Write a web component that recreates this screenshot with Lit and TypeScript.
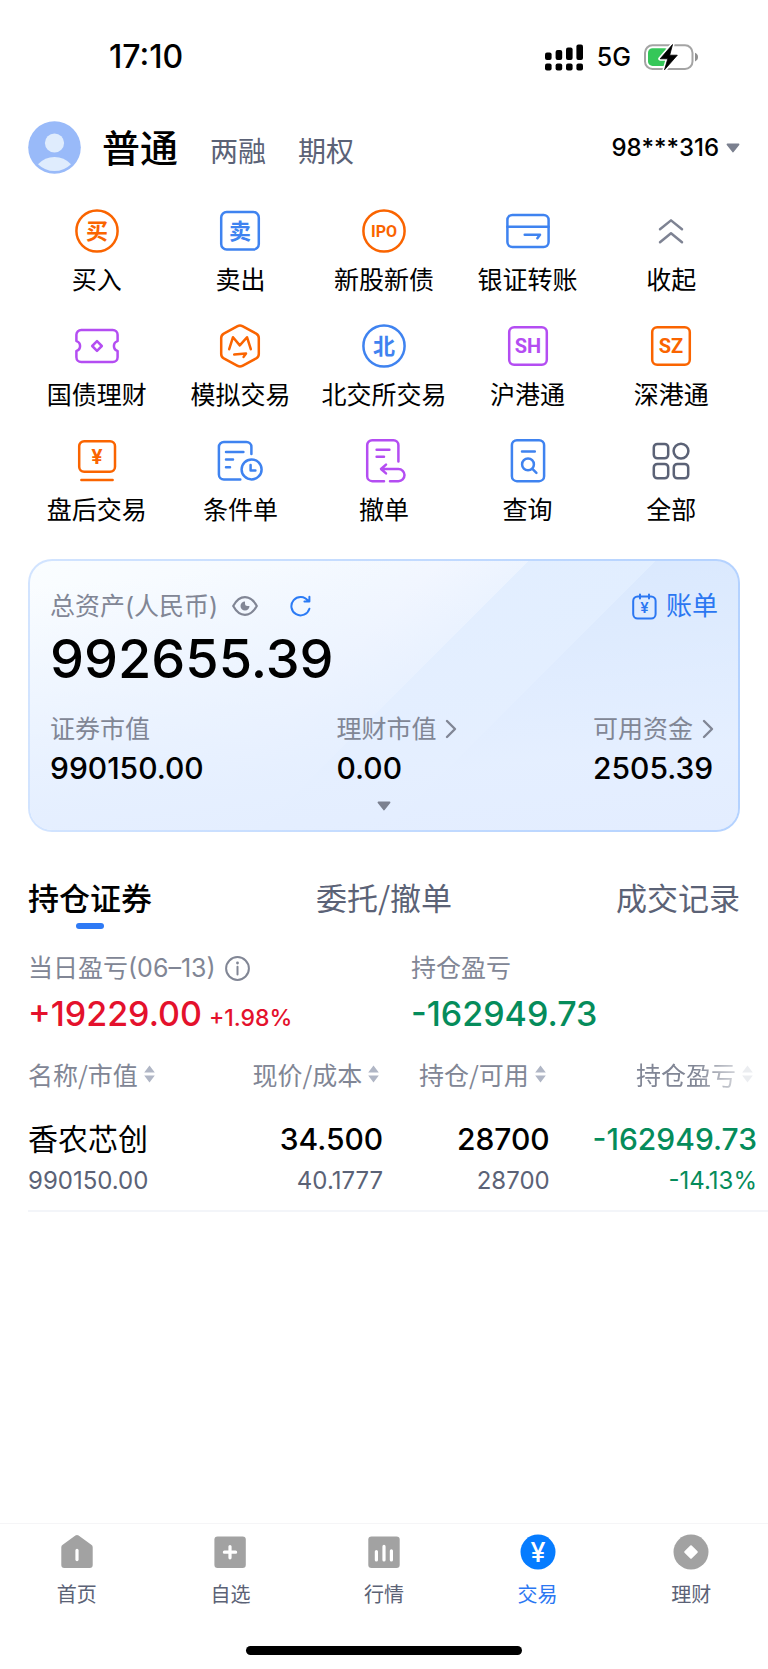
import { LitElement, html, css, TemplateResult } from "lit";
import { customElement, state } from "lit/decorators.js";

const ORANGE = "#fa6400";
const BLUE = "#3f83f0";
const PURPLE = "#b44df2";

const icon = (color: string, body: TemplateResult) => html`
  <span class="glyph" style="color:${color}">${body}</span>
`;

interface Shortcut {
  label: string;
  color: string;
  art: TemplateResult;
}

const shortcuts: Shortcut[] = [
  {
    label: "买入",
    color: ORANGE,
    art: html`<svg viewBox="0 0 48 48" aria-hidden="true">
      <circle cx="24" cy="24" r="20.6" />
      <text class="han" x="24" y="32">买</text>
    </svg>`,
  },
  {
    label: "卖出",
    color: BLUE,
    art: html`<svg viewBox="0 0 48 48" aria-hidden="true">
      <rect x="5.2" y="5" width="37.6" height="37.6" rx="5.5" />
      <text class="han" x="24" y="32">卖</text>
    </svg>`,
  },
  {
    label: "新股新债",
    color: ORANGE,
    art: html`<svg viewBox="0 0 48 48" aria-hidden="true">
      <circle cx="24" cy="24" r="20.6" />
      <text class="ipo" x="24" y="29.8">IPO</text>
    </svg>`,
  },
  {
    label: "银证转账",
    color: BLUE,
    art: html`<svg viewBox="0 0 48 48" aria-hidden="true">
      <rect x="3.4" y="7.9" width="41.2" height="32.2" rx="5" />
      <path d="M3.4 19.7h41.2M20.7 27.7H36l-2.6 3.5" />
    </svg>`,
  },
  {
    label: "收起",
    color: "#7e8393",
    art: html`<svg viewBox="0 0 48 48" aria-hidden="true">
      <path d="M13 22.3L24 13.4l11 8.9M13 35.2l11-8.9 11 8.9" />
    </svg>`,
  },
  {
    label: "国债理财",
    color: PURPLE,
    art: html`<svg viewBox="0 0 48 48" aria-hidden="true">
      <path
        d="M8.2 7.9h31.6a4.8 4.8 0 0 1 4.8 4.8v6.4a5.1 5.1 0 0 0 0 9.8v6.4a4.8 4.8 0 0 1-4.8 4.8H8.2a4.8 4.8 0 0 1-4.8-4.8v-6.4a5.1 5.1 0 0 0 0-9.8v-6.4a4.8 4.8 0 0 1 4.8-4.8z"
      />
      <path d="M24 19.2l4.8 4.8-4.8 4.8-4.8-4.8z" />
    </svg>`,
  },
  {
    label: "模拟交易",
    color: ORANGE,
    art: html`<svg viewBox="0 0 48 48" aria-hidden="true">
      <path
        d="M21.6 4.1Q24 2.8 26.4 4.1L40.2 11.6Q42.8 13.1 42.8 16V32Q42.8 34.9 40.2 36.4L26.4 43.9Q24 45.2 21.6 43.9L7.8 36.4Q5.2 34.9 5.2 32V16Q5.2 13.1 7.8 11.6z"
      />
      <path d="M13.2 27.2L17 15.2l6.8 8.2L31 15.2l3.8 12M18.2 32.6l11.8-1.1-2.4 3.4" />
    </svg>`,
  },
  {
    label: "北交所交易",
    color: BLUE,
    art: html`<svg viewBox="0 0 48 48" aria-hidden="true">
      <circle cx="24" cy="24" r="20.6" />
      <text class="han" x="24" y="31.6">北</text>
    </svg>`,
  },
  {
    label: "沪港通",
    color: PURPLE,
    art: html`<svg viewBox="0 0 48 48" aria-hidden="true">
      <rect x="5.2" y="5.2" width="37.6" height="37.6" rx="5" />
      <text class="code" x="24" y="31.2">SH</text>
    </svg>`,
  },
  {
    label: "深港通",
    color: ORANGE,
    art: html`<svg viewBox="0 0 48 48" aria-hidden="true">
      <rect x="5.2" y="5.2" width="37.6" height="37.6" rx="5" />
      <text class="code" x="24" y="31.2">SZ</text>
    </svg>`,
  },
  {
    label: "盘后交易",
    color: ORANGE,
    art: html`<svg viewBox="0 0 48 48" aria-hidden="true">
      <rect x="6.2" y="4.2" width="35.8" height="30.6" rx="5" />
      <path d="M8.4 43h31.2" />
      <text class="yuan" x="24" y="27">¥</text>
    </svg>`,
  },
  {
    label: "条件单",
    color: BLUE,
    art: html`<svg viewBox="0 0 48 48" aria-hidden="true">
      <path
        d="M35.4 17V10a5 5 0 0 0-5-5H7.9a5 5 0 0 0-5 5v27.5a5 5 0 0 0 5 5h16.4M10 15h17.4M10 22.6h7M10 30.3h4"
      />
      <circle cx="35.6" cy="32.4" r="10" />
      <path d="M34.6 28v5.4h4.8" />
    </svg>`,
  },
  {
    label: "撤单",
    color: PURPLE,
    art: html`<svg viewBox="0 0 48 48" aria-hidden="true">
      <path
        d="M38.4 24.4V8.2a5 5 0 0 0-5-5H12.2a5 5 0 0 0-5 5v31a5 5 0 0 0 5 5H24M16.6 12.7h12.8M16.6 19.7H24"
      />
      <path d="M22 32h16.4a6 6 0 0 1 0 12.2H30M26 27.6L21 32l5 4.4" />
    </svg>`,
  },
  {
    label: "查询",
    color: BLUE,
    art: html`<svg viewBox="0 0 48 48" aria-hidden="true">
      <rect x="7.9" y="3.2" width="32.2" height="41" rx="5" />
      <path d="M18 14.4h12.8M28.4 31.8l4 4" />
      <circle cx="24" cy="27.4" r="5.9" />
    </svg>`,
  },
  {
    label: "全部",
    color: "#5b6276",
    art: html`<svg viewBox="0 0 48 48" aria-hidden="true">
      <rect x="6.8" y="6.9" width="14.4" height="14.4" rx="3.6" />
      <circle cx="34" cy="14.1" r="7.4" />
      <rect x="6.8" y="26.9" width="14.4" height="14.4" rx="3.6" />
      <rect x="26.8" y="26.9" width="14.4" height="14.4" rx="3.6" />
    </svg>`,
  },
];

const navItems = [
  {
    label: "首页",
    art: html`<svg viewBox="0 0 36 36" aria-hidden="true">
      <path
        fill="currentColor"
        d="M16.4 1.5a2.6 2.6 0 0 1 3.2 0l12.7 9.2a3 3 0 0 1 1.4 2.6V31a3 3 0 0 1-3 3H5.3a3 3 0 0 1-3-3V13.3a3 3 0 0 1 1.4-2.6z"
      />
      <path class="cut" d="M18 16.4v9.2" />
    </svg>`,
  },
  {
    label: "自选",
    art: html`<svg viewBox="0 0 36 36" aria-hidden="true">
      <rect x="2.4" y="2.4" width="31.4" height="31.6" rx="3.2" fill="currentColor" />
      <path class="cut" d="M18 12.6v11.2M12.4 18.2h11.2" />
    </svg>`,
  },
  {
    label: "行情",
    art: html`<svg viewBox="0 0 36 36" aria-hidden="true">
      <rect x="2.3" y="2.4" width="31.4" height="31.6" rx="3.2" fill="currentColor" />
      <path class="cut" d="M10.4 17.6v8.4M18 12.4v13.6M25.4 16.8v9.2" />
    </svg>`,
  },
  {
    label: "交易",
    art: html`<svg viewBox="0 0 36 36" aria-hidden="true">
      <circle cx="18" cy="18" r="17.5" fill="currentColor" />
      <text class="mark" x="18" y="27.6">¥</text>
    </svg>`,
  },
  {
    label: "理财",
    art: html`<svg viewBox="0 0 36 36" aria-hidden="true">
      <circle cx="18" cy="18" r="17.5" fill="currentColor" />
      <path
        d="M18 12.2l5.8 5.8-5.8 5.8-5.8-5.8z"
        fill="#fff"
        stroke="#fff"
        stroke-width="2"
        stroke-linejoin="round"
      />
    </svg>`,
  },
];

const columns = ["名称/市值", "现价/成本", "持仓/可用", "持仓盈亏"];

const positions = [
  {
    name: "香农芯创",
    value: "990150.00",
    price: "34.500",
    cost: "40.1777",
    held: "28700",
    usable: "28700",
    profit: "-162949.73",
    rate: "-14.13%",
  },
];

@customElement("app-root")
export class AppRoot extends LitElement {
  @state() private tab = 0;
  @state() private nav = 3;

  static styles = css`
    :host {
      display: block;
      background: #fff;
      color: #000;
      font-family: Inter, "Noto Sans CJK SC", sans-serif;
      font-size: 25px;
    }
    * {
      box-sizing: border-box;
    }
    button {
      font: inherit;
      color: inherit;
      background: none;
      border: 0;
      padding: 0;
      margin: 0;
      cursor: pointer;
    }
    a {
      color: inherit;
      text-decoration: none;
    }
    svg {
      display: block;
      flex: none;
    }
    dl,
    dd,
    p {
      margin: 0;
      font-weight: inherit;
    }
    .page {
      display: flex;
      flex-direction: column;
      min-height: 100vh;
    }

    .status {
      display: flex;
      align-items: center;
      justify-content: space-between;
      padding: 36px 70px 0 109px;
      line-height: 42px;
      font-size: 32px;
      font-weight: 500;
    }
    .signals {
      display: flex;
      align-items: center;
      gap: 13px;
      font-size: 25px;
    }

    .account {
      display: flex;
      align-items: center;
      padding: 43px 28px 0;
    }
    .kinds {
      display: flex;
      align-items: baseline;
      gap: 32px;
      margin-left: 21px;
      padding-top: 4px;
      line-height: 40px;
      font-size: 28px;
      color: #5b6276;
    }
    .kinds .current {
      font-size: 38px;
      font-weight: 500;
      color: #000;
    }
    .number {
      display: flex;
      align-items: center;
      gap: 7px;
      margin-left: auto;
      font-size: 24px;
      font-weight: 500;
    }
    .caret {
      color: #7b808f;
    }

    .shortcuts {
      display: grid;
      grid-template-columns: repeat(5, 1fr);
      row-gap: 24px;
      padding: 33px 25px 0;
    }
    .shortcut {
      display: flex;
      flex-direction: column;
      align-items: center;
      gap: 8px;
      line-height: 35px;
      white-space: nowrap;
    }
    .glyph svg {
      width: 48px;
      height: 48px;
      fill: none;
      stroke: currentColor;
      stroke-width: 2.5;
      stroke-linecap: round;
      stroke-linejoin: round;
    }
    .glyph text {
      fill: currentColor;
      stroke: none;
      text-anchor: middle;
      font-weight: 700;
    }
    .glyph .han {
      font-family: "Noto Sans CJK SC", sans-serif;
      font-size: 22px;
    }
    .ipo {
      font-family: Roboto, sans-serif;
      font-size: 16px;
    }
    .code {
      font-family: Roboto, sans-serif;
      font-size: 20px;
    }
    .yuan {
      font-size: 20px;
    }

    .assets {
      margin: 31px 28px 0;
      padding: 27px 20px 19px;
      border: 2px solid transparent;
      border-radius: 24px;
      background:
        linear-gradient(175deg, rgba(229, 239, 255, 0) 8%, rgba(229, 239, 255, 0.96) 74%, #e3edff)
          padding-box,
        linear-gradient(
            135deg,
            #fafdff 0%,
            #f3f8ff 38%,
            #f3f7ff 42%,
            #edf4ff 51%,
            #e2eeff 51%,
            #e1eeff 64%,
            #d9e8fe 64%,
            #d8e8fe 100%
          )
          padding-box,
        linear-gradient(90deg, #d2e4ff, #b4d2ff) border-box;
    }
    .assets-head {
      display: flex;
      align-items: center;
      line-height: 36px;
      color: #818695;
    }
    .eye {
      margin-left: 14px;
    }
    .refresh {
      margin-left: 32px;
      color: #2b7bf5;
    }
    .bill {
      display: flex;
      align-items: center;
      gap: 9px;
      margin-left: auto;
      font-size: 26px;
      color: #2b77f2;
    }
    .bill text {
      fill: currentColor;
      text-anchor: middle;
      font-size: 15px;
      font-weight: 600;
    }
    .total {
      margin-top: 3px;
      line-height: 64px;
      font-size: 54px;
      font-weight: 500;
    }
    .parts {
      display: grid;
      grid-template-columns: 287fr 257fr auto;
      margin-top: 20px;
      padding-right: 4px;
    }
    .parts dt {
      display: flex;
      align-items: center;
      gap: 9px;
      line-height: 36px;
      color: #818695;
    }
    .parts dd {
      margin-top: 1px;
      line-height: 40px;
      font-size: 30px;
      font-weight: 500;
    }
    .more {
      display: block;
      margin: 13px auto 0;
    }

    .tabs {
      display: flex;
      justify-content: space-between;
      padding: 43px 28px 0;
      font-family: "Noto Sans CJK SC", sans-serif;
      font-size: 31px;
      line-height: 44px;
      color: #5b6276;
    }
    .tab {
      display: flex;
      flex-direction: column;
      align-items: center;
      gap: 4px;
    }
    .tab::after {
      content: "";
      width: 28px;
      height: 6px;
      border-radius: 3px;
    }
    .tab.on {
      color: #000;
      font-weight: 500;
    }
    .tab.on::after {
      background: #2f7af5;
    }

    .summary {
      display: grid;
      grid-template-columns: 383fr 329fr;
      padding: 21px 28px 0;
    }
    .summary dt {
      display: flex;
      align-items: center;
      gap: 9px;
      line-height: 36px;
      color: #818695;
    }
    .summary dd {
      display: flex;
      align-items: baseline;
      gap: 7px;
      margin-top: 4px;
      line-height: 48px;
      font-size: 34px;
      font-weight: 500;
    }
    .rate {
      font-size: 23px;
    }
    .up {
      color: #e4112c;
    }
    .down {
      color: #058c5b;
    }

    .positions {
      width: calc(100% - 28px);
      margin: 14px 0 0 28px;
      border-collapse: collapse;
      table-layout: fixed;
    }
    .positions th {
      padding: 0;
      font-weight: 400;
      text-align: right;
      line-height: 36px;
      color: #818695;
    }
    .positions th:nth-child(1) {
      width: 23%;
    }
    .positions th:nth-child(2) {
      width: 25%;
    }
    .positions th:nth-child(3) {
      width: 22.5%;
    }
    .positions th:nth-child(n + 2) {
      padding-right: 4px;
    }
    .positions th:first-child,
    .positions td:first-child {
      text-align: left;
    }
    .positions th:last-child {
      padding-right: 15px;
    }
    .positions th:last-child .sort {
      mask-image: linear-gradient(90deg, #000 50%, rgba(0, 0, 0, 0.25) 92%);
    }
    .positions td:last-child {
      padding-right: 11px;
    }
    .sort {
      display: inline-flex;
      align-items: center;
      gap: 6px;
      font-family: "Noto Sans CJK SC", sans-serif;
      white-space: nowrap;
    }
    .positions td {
      padding: 25px 0 11px;
      border-bottom: 2px solid #f3f5f9;
      text-align: right;
      white-space: nowrap;
    }
    .main {
      line-height: 40px;
      font-size: 30px;
      font-weight: 500;
    }
    .name {
      font-weight: 400;
    }
    .sub {
      margin-top: 4px;
      line-height: 36px;
      font-size: 24px;
    }
    .muted {
      color: #5b6276;
    }

    .bottom {
      margin-top: auto;
      padding-bottom: 14px;
      border-top: 1px solid #f5f5f7;
    }
    .nav {
      display: grid;
      grid-template-columns: repeat(5, 1fr);
      padding-top: 10px;
    }
    .nav a {
      display: flex;
      flex-direction: column;
      align-items: center;
      gap: 11px;
      font-size: 20px;
      line-height: 28px;
      color: #5b6276;
    }
    .nav a.on {
      color: #2b77f2;
    }
    .nav svg {
      width: 36px;
      height: 36px;
      color: #a2a2a2;
    }
    .nav a.on svg {
      color: #067cff;
    }
    .cut {
      fill: none;
      stroke: #fff;
      stroke-width: 3.2;
      stroke-linecap: round;
    }
    .mark {
      fill: #fff;
      text-anchor: middle;
      font-size: 27px;
      font-weight: 500;
    }
    .handle {
      width: 36%;
      height: 9px;
      margin: 37px auto 0;
      border-radius: 5px;
      background: #000;
    }
  `;

  private caret() {
    return html`<svg class="caret" width="14" height="10" viewBox="0 0 14 10" aria-hidden="true">
      <path
        d="M1.4 1.4h11.2L7 8.6z"
        fill="currentColor"
        stroke="currentColor"
        stroke-width="1.6"
        stroke-linejoin="round"
      />
    </svg>`;
  }

  private chevron() {
    return html`<svg width="12" height="20" viewBox="0 0 12 20" aria-hidden="true">
      <path
        d="M2 2l8 8-8 8"
        fill="none"
        stroke="currentColor"
        stroke-width="2.4"
        stroke-linecap="round"
        stroke-linejoin="round"
      />
    </svg>`;
  }

  private sorter() {
    return html`<svg width="11" height="18" viewBox="0 0 11 18" aria-hidden="true">
      <path d="M5.5 0.4l5.3 7H0.2zM5.5 17.6l5.3-7H0.2z" fill="#b0b6c5" />
    </svg>`;
  }

  render() {
    return html`
      <div class="page">
        <div class="status">
          <time>17:10</time>
          <div class="signals">
            <svg width="39" height="27" viewBox="0 0 39 27" aria-hidden="true">
              <rect x="0" y="8.5" width="6.6" height="7.5" rx="2" />
              <rect x="10.6" y="6" width="6.6" height="10" rx="2" />
              <rect x="21" y="3.5" width="6.6" height="12.5" rx="2" />
              <rect x="31.4" y="0.5" width="6.6" height="15.5" rx="2" />
              <rect x="0" y="19.5" width="6.6" height="7" rx="2" />
              <rect x="10.6" y="19.5" width="6.6" height="7" rx="2" />
              <rect x="21" y="19.5" width="6.6" height="7" rx="2" />
              <rect x="31.4" y="19.5" width="6.6" height="7" rx="2" />
            </svg>
            <span>5G</span>
            <svg width="54" height="28" viewBox="0 0 54 28" aria-hidden="true">
              <rect x="1" y="2.3" width="47.5" height="23.6" rx="7.5" fill="none" stroke="#a4a4a4" stroke-width="2" />
              <path d="M51 9.8q3 1.2 3 4.3t-3 4.3z" fill="#8f8f8f" />
              <rect x="4" y="5.3" width="21" height="17.6" rx="4.5" fill="#35c759" />
              <path
                d="M28.5 1.5L16.2 15.8h7.6l-3.3 11L33.3 12.2h-7.6z"
                stroke="#fff"
                stroke-width="4"
                stroke-linejoin="round"
              />
              <path
                d="M28.5 1.5L16.2 15.8h7.6l-3.3 11L33.3 12.2h-7.6z"
                stroke="#000"
                stroke-width="0.8"
                stroke-linejoin="round"
              />
            </svg>
          </div>
        </div>

        <header class="account">
          <svg width="53" height="53" viewBox="0 0 53 53" role="img" aria-label="头像">
            <circle cx="26.5" cy="26.5" r="26.3" fill="#99baf9" />
            <circle cx="26.5" cy="22" r="9.6" fill="#dfecfd" />
            <path d="M10 43.2Q17 36 26.5 36T43 43.2Q36 50 26.5 50T10 43.2z" fill="#dfecfd" />
          </svg>
          <div class="kinds">
            <button class="current">普通</button>
            <button>两融</button>
            <button>期权</button>
          </div>
          <button class="number">98***316 ${this.caret()}</button>
        </header>

        <nav class="shortcuts">
          ${shortcuts.map(
            (s) => html`<a class="shortcut" href="#">${icon(s.color, s.art)}<span>${s.label}</span></a>`
          )}
        </nav>

        <section class="assets">
          <div class="assets-head">
            <span>总资产(人民币)</span>
            <button class="eye" aria-label="隐藏金额">
              <svg width="26" height="20" viewBox="0 0 26 20">
                <path
                  d="M1.2 10C4.5 4 8.6 1.2 13 1.2S21.5 4 24.8 10C21.5 16 17.4 18.8 13 18.8S4.5 16 1.2 10z"
                  fill="none"
                  stroke="currentColor"
                  stroke-width="2.2"
                  stroke-linejoin="round"
                />
                <path d="M13 5.5a4.5 4.5 0 1 0 4.5 4.500h-2a2.500 2.500 0 0 1-2.500-2.500z" fill="currentColor" />
              </svg>
            </button>
            <button class="refresh" aria-label="刷新">
              <svg width="21" height="22" viewBox="0 0 21 22" fill="none" stroke="currentColor" stroke-width="2" stroke-linecap="round" stroke-linejoin="round">
                <path d="M19.4 13.8A9.2 9.2 0 1 1 18 5.7M19.4 1.8v4.8h-5" />
              </svg>
            </button>
            <a class="bill" href="#">
              <svg width="25" height="27" viewBox="0 0 25 27" aria-hidden="true">
                <g fill="none" stroke="currentColor" stroke-width="2" stroke-linecap="round">
                  <rect x="1.2" y="3.5" width="22.4" height="22" rx="4.5" />
                  <path d="M8 1.5v4M17 1.5v4" />
                </g>
                <text x="12.4" y="20">¥</text>
              </svg>
              账单
            </a>
          </div>
          <p class="total">992655.39</p>
          <dl class="parts">
            <div><dt>证券市值</dt><dd>990150.00</dd></div>
            <div><dt>理财市值 ${this.chevron()}</dt><dd>0.00</dd></div>
            <div><dt>可用资金 ${this.chevron()}</dt><dd>2505.39</dd></div>
          </dl>
          <button class="more" aria-label="展开">${this.caret()}</button>
        </section>

        <div class="tabs" role="tablist">
          ${["持仓证券", "委托/撤单", "成交记录"].map(
            (t, i) => html`<button
              class="tab ${i === this.tab ? "on" : ""}"
              role="tab"
              aria-selected=${i === this.tab ? "true" : "false"}
              @click=${() => (this.tab = i)}
            >${t}</button>`
          )}
        </div>

        <dl class="summary">
          <div>
            <dt>
              当日盈亏(06–13)
              <svg width="25" height="25" viewBox="0 0 25 25" aria-hidden="true">
                <circle cx="12.5" cy="12.5" r="11.4" fill="none" stroke="currentColor" stroke-width="2" />
                <path d="M12.5 10.8v7.6" stroke="currentColor" stroke-width="2" stroke-linecap="round" />
                <circle cx="12.5" cy="7" r="1.4" fill="currentColor" />
              </svg>
            </dt>
            <dd class="up">+19229.00<span class="rate">+1.98%</span></dd>
          </div>
          <div>
            <dt>持仓盈亏</dt>
            <dd class="down">-162949.73</dd>
          </div>
        </dl>

        <table class="positions">
          <thead>
            <tr>
              ${columns.map((c) => html`<th scope="col"><button class="sort">${c}${this.sorter()}</button></th>`)}
            </tr>
          </thead>
          <tbody>
            ${positions.map(
              (p) => html`<tr>
                <td><div class="main name">${p.name}</div><div class="sub muted">${p.value}</div></td>
                <td><div class="main">${p.price}</div><div class="sub muted">${p.cost}</div></td>
                <td><div class="main">${p.held}</div><div class="sub muted">${p.usable}</div></td>
                <td class="down"><div class="main">${p.profit}</div><div class="sub">${p.rate}</div></td>
              </tr>`
            )}
          </tbody>
        </table>

        <footer class="bottom">
          <nav class="nav">
            ${navItems.map(
              (n, i) => html`<a
                href="#"
                class=${i === this.nav ? "on" : ""}
                @click=${(e: Event) => {
                  e.preventDefault();
                  this.nav = i;
                }}
              >${n.art}<span>${n.label}</span></a>`
            )}
          </nav>
          <div class="handle"></div>
        </footer>
      </div>
    `;
  }
}
